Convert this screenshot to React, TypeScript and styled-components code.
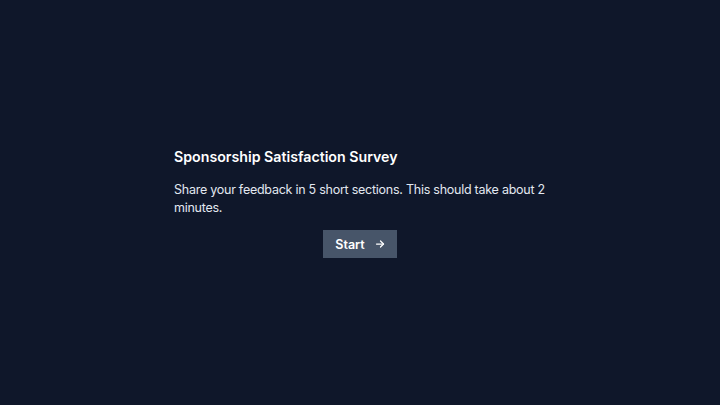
import React from "react"
import styled, { createGlobalStyle } from "styled-components"

const GlobalStyle = createGlobalStyle`
  html, body {
    margin: 0;
    padding: 0;
    background: #0f172a;
  }
  body {
    font-family: "Inter", "Noto Sans", sans-serif;
  }
`

const Screen = styled.div`
  width: 100%;
  height: 100vh;
  display: flex;
  align-items: center;
  justify-content: center;
  background: #0f172a;
`

const Card = styled.div`
  width: 372px;
  display: flex;
  flex-direction: column;
`

const Title = styled.h1`
  margin: 0 0 14px 0;
  font-size: 14.2px;
  line-height: 20px;
  font-weight: 600;
  color: #ffffff;
`

const Intro = styled.p`
  margin: 0 0 13px 0;
  font-size: 12.5px;
  line-height: 18px;
  letter-spacing: -0.25px;
  color: #e2e8f0;
`

const StartButton = styled.button`
  align-self: center;
  display: flex;
  align-items: center;
  gap: 9px;
  height: 28px;
  padding: 0 11px 0 12px;
  border: none;
  background: #475569;
  color: #ffffff;
  font-family: inherit;
  font-size: 12.5px;
  font-weight: 600;
  cursor: pointer;
`

function ArrowRight() {
  return (
    <svg width="12" height="12" viewBox="0 0 24 24" fill="none" stroke="currentColor" strokeWidth="2.5" strokeLinecap="round" strokeLinejoin="round">
      <path d="M5 12h14" />
      <path d="M13 6l6 6-6 6" />
    </svg>
  )
}

export default function App() {
  return (
    <>
      <GlobalStyle />
      <Screen>
        <Card>
          <Title>Sponsorship Satisfaction Survey</Title>
          <Intro>Share your feedback in 5 short sections. This should take about 2 minutes.</Intro>
          <StartButton>
            Start
            <ArrowRight />
          </StartButton>
        </Card>
      </Screen>
    </>
  )
}
